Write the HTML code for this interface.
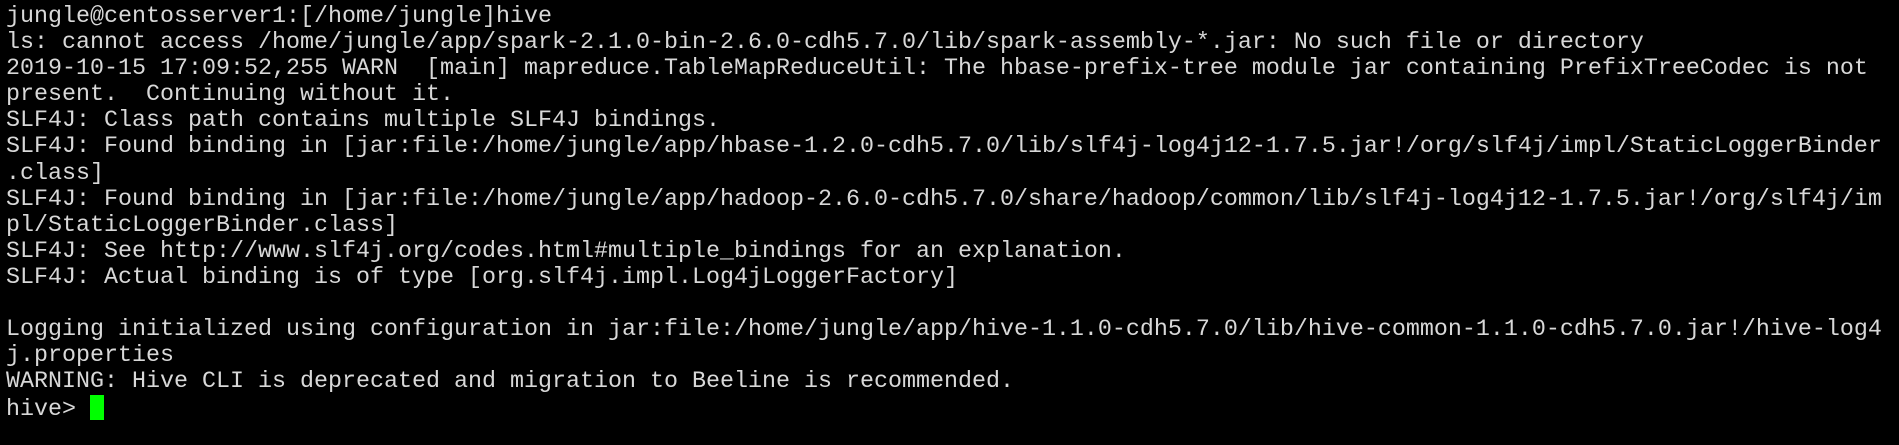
<!DOCTYPE html>
<html><head><style>
html,body{margin:0;padding:0;background:#000;width:1899px;height:445px;overflow:hidden}
pre{margin:0;position:absolute;left:6px;top:4px;font-family:"Liberation Mono","Courier New",monospace;font-size:23.33px;line-height:26.1px;color:#d8d8d8;white-space:pre}
.c{display:inline-block;width:14px;height:25px;background:#00ff00;vertical-align:-5px}
</style></head><body><pre>jungle@centosserver1:[/home/jungle]hive
ls: cannot access /home/jungle/app/spark-2.1.0-bin-2.6.0-cdh5.7.0/lib/spark-assembly-*.jar: No such file or directory
2019-10-15 17:09:52,255 WARN  [main] mapreduce.TableMapReduceUtil: The hbase-prefix-tree module jar containing PrefixTreeCodec is not
present.  Continuing without it.
SLF4J: Class path contains multiple SLF4J bindings.
SLF4J: Found binding in [jar:file:/home/jungle/app/hbase-1.2.0-cdh5.7.0/lib/slf4j-log4j12-1.7.5.jar!/org/slf4j/impl/StaticLoggerBinder
.class]
SLF4J: Found binding in [jar:file:/home/jungle/app/hadoop-2.6.0-cdh5.7.0/share/hadoop/common/lib/slf4j-log4j12-1.7.5.jar!/org/slf4j/im
pl/StaticLoggerBinder.class]
SLF4J: See http://www.slf4j.org/codes.html#multiple_bindings for an explanation.
SLF4J: Actual binding is of type [org.slf4j.impl.Log4jLoggerFactory]

Logging initialized using configuration in jar:file:/home/jungle/app/hive-1.1.0-cdh5.7.0/lib/hive-common-1.1.0-cdh5.7.0.jar!/hive-log4
j.properties
WARNING: Hive CLI is deprecated and migration to Beeline is recommended.
hive&gt; <span class="c"></span></pre></body></html>
